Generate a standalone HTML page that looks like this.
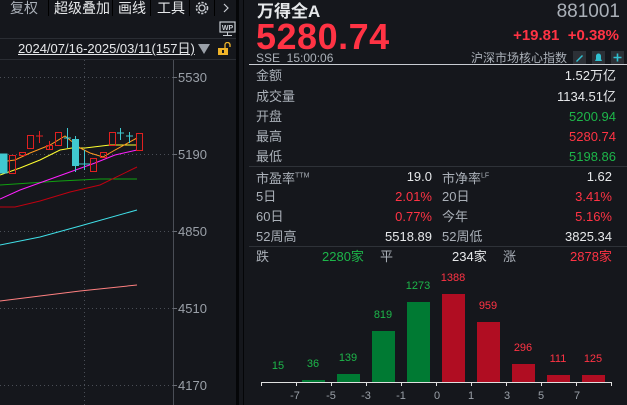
<!DOCTYPE html>
<html><head><meta charset="utf-8"><style>
*{margin:0;padding:0;box-sizing:border-box}
body{width:627px;height:405px;background:#15171c;overflow:hidden;position:relative;font-family:"Liberation Sans","Noto Sans CJK SC",sans-serif;color:#c8ccd2}
.a{position:absolute;white-space:nowrap}
.g{color:#1db64a}.r{color:#ff3344}.w{color:#e6e8ea}.gr{color:#aab0b8}
.row{position:absolute;left:256px;width:360px;font-size:13px;height:18px;line-height:18px}
.row .v{position:absolute;right:0}
.half{position:absolute;font-size:13px;height:18px;line-height:18px;width:180px}
.half .v{position:absolute;right:4px}
</style></head><body>
<!-- left toolbar -->
<div class="a gr" style="left:10px;top:0;font-size:14px;line-height:16px">复权</div>
<div class="a w" style="left:54px;top:0;font-size:14px;line-height:16px">超级叠加</div>
<div class="a w" style="left:118px;top:0;font-size:14px;line-height:16px">画线</div>
<div class="a w" style="left:157px;top:0;font-size:14px;line-height:16px">工具</div>
<div class="a" style="left:48px;top:0;width:1px;height:16px;background:#000"></div>
<div class="a" style="left:112px;top:0;width:1px;height:16px;background:#000"></div>
<div class="a" style="left:150px;top:0;width:1px;height:16px;background:#000"></div>
<div class="a" style="left:189px;top:0;width:1px;height:16px;background:#000"></div>
<div class="a" style="left:214px;top:0;width:1px;height:16px;background:#000"></div>
<svg class="a" style="left:193px;top:0" width="18" height="16" viewBox="0 0 18 16"><circle cx="9" cy="8" r="3" fill="none" stroke="#c8ccd2" stroke-width="1.3"/><circle cx="9" cy="8" r="5.5" fill="none" stroke="#c8ccd2" stroke-width="1.6" stroke-dasharray="2.2 1.4"/></svg>
<svg class="a" style="left:221px;top:2" width="10" height="12"><path d="M3 2 L7 6 L3 10" fill="none" stroke="#c8ccd2" stroke-width="1.2"/></svg>
<svg class="a" style="left:219px;top:21px" width="17" height="16"><rect x="1" y="1" width="15" height="10" fill="none" stroke="#c8ccd2" stroke-width="1.2"/><text x="8.5" y="9" font-size="7" font-weight="bold" fill="#c8ccd2" text-anchor="middle" font-family="Liberation Sans">WP</text><path d="M8.5 11v3M4 14.5h9" stroke="#c8ccd2"/></svg>
<div class="a" style="left:0;top:38px;width:237px;height:1px;background:#2a2d33"></div>
<div class="a w" style="left:18px;top:41px;font-size:13px;line-height:15px;text-decoration:underline">2024/07/16-2025/03/11(157日)</div>
<svg class="a" style="left:197px;top:43px" width="14" height="12"><path d="M1 1h12L7 11z" fill="#9aa0a8"/></svg>
<svg class="a" style="left:217px;top:42px" width="16" height="14"><rect x="1" y="6" width="10" height="7" fill="#f0b429"/><path d="M8 6V3a2.5 2.5 0 015 0v2" fill="none" stroke="#f0b429" stroke-width="1.3"/><rect x="5" y="8" width="2" height="3" fill="#15171c"/></svg>
<div class="a" style="left:0;top:59px;width:237px;height:1px;background:#2a2d33"></div>
<!-- chart -->
<svg class="a" style="left:0;top:60px" width="237" height="345" viewBox="0 60 237 345">
<g stroke="#4a4e56" stroke-dasharray="1 3" stroke-width="1">
<path d="M0 77.5H173M0 154.5H173M0 231.5H173M0 308.5H173M0 385.5H173M84.5 60V405"/></g>
<path d="M173.5 60V405" stroke="#4a4e56"/>
<path d="M173 77.5h4M173 154.5h4M173 231.5h4M173 308.5h4M173 385.5h4" stroke="#6a6e76"/>
<g font-family="Liberation Sans" font-size="13" fill="#9aa0a8">
<text x="178" y="82">5530</text><text x="178" y="159">5190</text><text x="178" y="236">4850</text><text x="178" y="313">4510</text><text x="178" y="390">4170</text></g>
<g fill="none" stroke-width="1">
<polyline stroke="#ff8080" points="0,301 40,296 80,291 137,285"/>
<polyline stroke="#40e0e8" points="0,245 40,237 80,226 137,210"/>
<polyline stroke="#10a010" points="0,185 30,183 60,181 100,179 137,179"/>
<polyline stroke="#c00010" points="0,207 15,207 40,201 70,192 100,185 137,167"/>
<polyline stroke="#ff20ff" points="0,199 20,190 45,181 70,172 95,163 115,155 137,150"/>
<polyline stroke="#ffff30" points="0,175 20,168 40,160 60,150 72,148 85,148 110,145 137,145"/>
<polyline stroke="#ff9a20" points="0,162 15,160 30,153 50,145 65,136 80,148 90,153 103,157 115,150 137,138"/>
</g>
<g fill="#40c8d0" stroke="#40c8d0"><rect x="0" y="154" width="7" height="19"/><rect x="72.5" y="139.5" width="6" height="26"/><path d="M75.5 136v36M84.5 150v20M78 164h12M67.5 128v20M64 138h7M120.5 128v12M117 133h7M129.5 132v11M126 136h7" fill="none"/></g>
<g fill="none" stroke="#e02020"><rect x="9.5" y="155.5" width="6" height="18"/><rect x="19.5" y="152.5" width="6" height="3"/><rect x="27.5" y="135.5" width="6" height="13"/><path d="M39.5 131v12M36 136h7M49.5 141v9"/><rect x="46.5" y="145.5" width="6" height="4"/><rect x="55.5" y="132.5" width="6" height="13"/><rect x="90.5" y="158.5" width="6" height="13"/><rect x="100.5" y="152.5" width="6" height="5"/><rect x="109.5" y="132.5" width="6" height="13"/><rect x="136.5" y="133.5" width="6" height="17"/></g>
</svg>
<div class="a" style="left:236px;top:0;width:3px;height:405px;background:#050608"></div>
<div class="a" style="left:243px;top:0;width:1px;height:405px;background:#050608"></div>
<!-- right -->
<div class="a w" style="left:257px;top:2px;font-size:17px;font-weight:bold;line-height:20px">万得全A</div>
<div class="a gr" style="right:7px;top:1px;font-size:19px;line-height:22px">881001</div>
<div class="a r" style="left:256px;top:19px;font-size:36px;font-weight:bold;line-height:36px;letter-spacing:0.5px">5280.74</div>
<div class="a r" style="right:8px;top:27px;font-size:15px;font-weight:bold;line-height:18px">+19.81&nbsp;&nbsp;+0.38%</div>
<div class="a gr" style="left:256px;top:51px;font-size:12px;line-height:14px">SSE&nbsp;&nbsp;15:00:06</div>
<div class="a gr" style="left:471px;top:51px;font-size:12px;line-height:14px">沪深市场核心指数</div>
<svg class="a" style="left:573px;top:51px" width="52" height="13"><rect x="0" y="0" width="13" height="13" fill="#2c3036"/><path d="M3 10l6-6 1 1-6 6z" fill="#30c0d0"/><rect x="19" y="0" width="13" height="13" fill="#2c3036"/><path d="M22 10h7l-1-2V5a2.5 2.5 0 00-5 0v3z" fill="#30c0d0"/><rect x="38" y="0" width="13" height="13" fill="#2c3036"/><path d="M44.5 2.5v8M40.5 6.5h8" stroke="#30c0d0" stroke-width="1.6"/></svg>
<div class="a" style="left:249px;top:64px;width:378px;height:1px;background:#c8ccd2"></div>
<div class="row" style="top:67px"><span class="gr">金额</span><span class="v w">1.52万亿</span></div>
<div class="row" style="top:88px"><span class="gr">成交量</span><span class="v w">1134.51亿</span></div>
<div class="row" style="top:108px"><span class="gr">开盘</span><span class="v g">5200.94</span></div>
<div class="row" style="top:128px"><span class="gr">最高</span><span class="v r">5280.74</span></div>
<div class="row" style="top:148px"><span class="gr">最低</span><span class="v g">5198.86</span></div>
<div class="a" style="left:249px;top:166px;width:378px;height:1px;background:#2e3238"></div>
<div class="half" style="left:256px;top:168px"><span class="gr">市盈率<sup style="font-size:7px">TTM</sup></span><span class="v w">19.0</span></div>
<div class="half" style="left:442px;top:168px"><span class="gr">市净率<sup style="font-size:7px">LF</sup></span><span class="v w" style="right:10px">1.62</span></div>
<div class="half" style="left:256px;top:188px"><span class="gr">5日</span><span class="v r">2.01%</span></div>
<div class="half" style="left:442px;top:188px"><span class="gr">20日</span><span class="v r" style="right:10px">3.41%</span></div>
<div class="half" style="left:256px;top:208px"><span class="gr">60日</span><span class="v r">0.77%</span></div>
<div class="half" style="left:442px;top:208px"><span class="gr">今年</span><span class="v r" style="right:10px">5.16%</span></div>
<div class="half" style="left:256px;top:228px"><span class="gr">52周高</span><span class="v w">5518.89</span></div>
<div class="half" style="left:442px;top:228px"><span class="gr">52周低</span><span class="v w" style="right:10px">3825.34</span></div>
<div class="a" style="left:249px;top:246px;width:378px;height:1px;background:#2e3238"></div>
<div class="a gr" style="left:256px;top:248px;font-size:13px;line-height:18px">跌</div>
<div class="a g" style="left:322px;top:248px;font-size:13px;line-height:18px">2280家</div>
<div class="a gr" style="left:380px;top:248px;font-size:13px;line-height:18px">平</div>
<div class="a w" style="left:452px;top:248px;font-size:13px;line-height:18px">234家</div>
<div class="a gr" style="left:503px;top:248px;font-size:13px;line-height:18px">涨</div>
<div class="a r" style="left:570px;top:248px;font-size:13px;line-height:18px">2878家</div>
<svg class="a" style="left:244px;top:260px" width="383" height="145" viewBox="244 260 383 145">
<g fill="#007a33"><rect x="302" y="380" width="23" height="2"/><rect x="337" y="374" width="23" height="8"/><rect x="372" y="331" width="23" height="51"/><rect x="407" y="302" width="23" height="80"/></g>
<g fill="#b00d22"><rect x="442" y="294" width="23" height="88"/><rect x="477" y="322" width="23" height="60"/><rect x="512" y="364" width="23" height="18"/><rect x="547" y="375" width="23" height="7"/><rect x="582" y="375" width="23" height="7"/></g>
<path d="M261 382.5H612M261.5 382v4M296.5 382v4M331.5 382v4M366.5 382v4M401.5 382v4M436.5 382v4M471.5 382v4M506.5 382v4M541.5 382v4M576.5 382v4M611.5 382v4" stroke="#e0e0e0"/>
<g font-family="Liberation Sans" font-size="11" text-anchor="middle">
<g fill="#1db64a"><text x="278" y="369">15</text><text x="313" y="367">36</text><text x="348" y="361">139</text><text x="383" y="318">819</text><text x="418" y="289">1273</text></g>
<g fill="#ff3344"><text x="453" y="281">1388</text><text x="488" y="309">959</text><text x="523" y="351">296</text><text x="558" y="362">111</text><text x="593" y="362">125</text></g>
<g fill="#9aa0a8"><text x="295" y="399">-7</text><text x="331" y="399">-5</text><text x="366" y="399">-3</text><text x="401" y="399">-1</text><text x="437" y="399">0</text><text x="471" y="399">1</text><text x="507" y="399">3</text><text x="541" y="399">5</text><text x="577" y="399">7</text></g></g>
</svg>
</body></html>
